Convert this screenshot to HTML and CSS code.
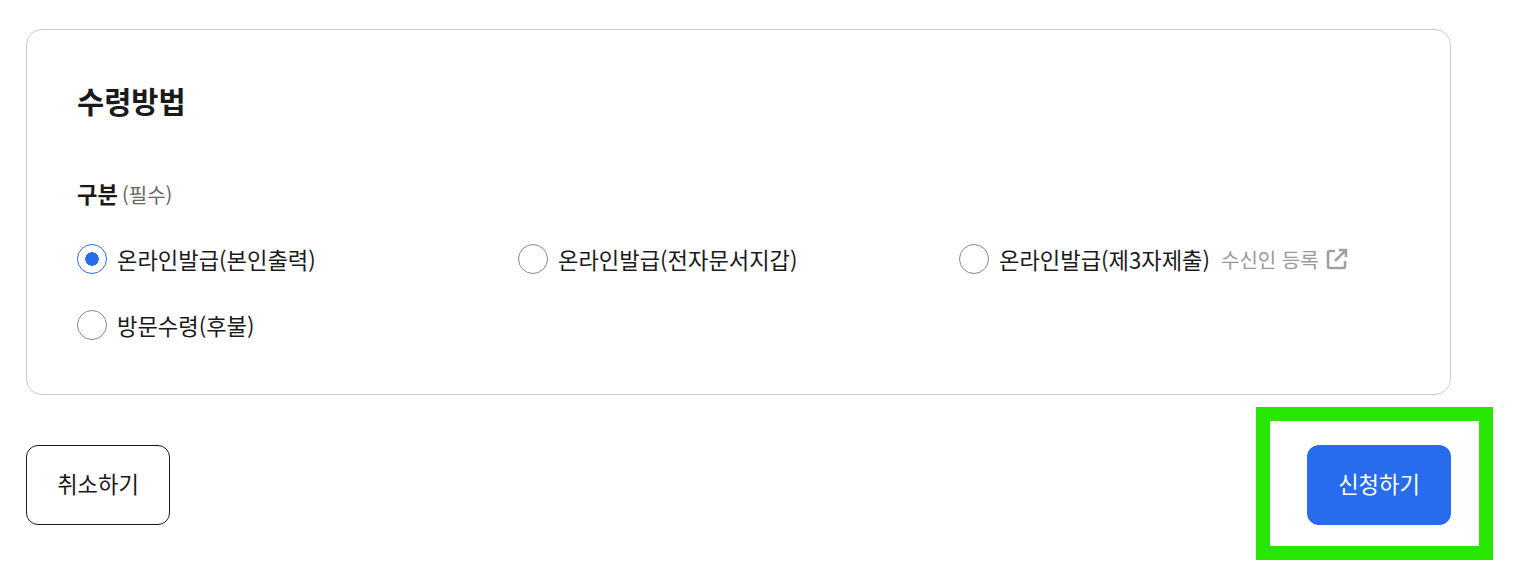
FILE: index.html
```html
<!DOCTYPE html>
<html lang="ko">
<head>
    <meta charset="UTF-8">
    <meta name="viewport" content="width=device-width, initial-scale=1.0">
    <title>수령방법</title>
    <link rel="stylesheet" href="styles.css">
</head>
<body>
    <div class="page">
        <section class="receive-card">
            <h2 class="card-title">수령방법</h2>
            <div class="field-label">구분 <span class="required">(필수)</span></div>
            <div class="radio-grid">
                <label class="radio-item">
                    <input type="radio" name="receive" checked>
                    <span>온라인발급(본인출력)</span>
                </label>
                <label class="radio-item">
                    <input type="radio" name="receive">
                    <span>온라인발급(전자문서지갑)</span>
                </label>
                <div class="radio-item">
                    <label class="radio-item">
                        <input type="radio" name="receive">
                        <span>온라인발급(제3자제출)</span>
                    </label>
                    <a class="link-register" href="#">수신인 등록
                        <svg width="22" height="22" viewBox="0 0 22 22" fill="none" stroke="#a0a0a0" stroke-width="2.6">
                            <path d="M9 3H4a2 2 0 0 0-2 2v13a2 2 0 0 0 2 2h13a2 2 0 0 0 2-2v-5"/>
                            <path d="M13 2h7v7M20 2L9 13"/>
                        </svg>
                    </a>
                </div>
                <label class="radio-item">
                    <input type="radio" name="receive">
                    <span>방문수령(후불)</span>
                </label>
            </div>
        </section>

        <div class="actions">
            <button class="btn btn-outline">취소하기</button>
            <div class="btn-wrap">
                <button class="btn btn-primary">신청하기</button>
                <div class="highlight"></div>
            </div>
        </div>
    </div>
</body>
</html>
```

FILE: styles.css
```css
* {
    box-sizing: border-box;
}

body {
    margin: 0;
    min-height: 572px;
    background: #fff;
    color: #1a1a1a;
    font-family: "Noto Sans CJK KR", "Noto Sans", sans-serif;
}

.page {
    width: 1425px;
    padding-top: 29px;
    margin-left: 26px;
    height: 572px;
}

.receive-card {
    height: 366px;
    padding: 47px 50px 0;
    border: 1px solid #ccc;
    border-radius: 16px;
}

.card-title {
    margin: 0;
    font-size: 29.5px;
    line-height: 46px;
    font-weight: 700;
}

.field-label {
    margin-top: 54px;
    font-size: 22.2px;
    line-height: 32px;
    font-weight: 700;
}

.required {
    margin-left: -2px;
    font-size: 20px;
    font-weight: 400;
    color: #666;
}

.radio-grid {
    display: grid;
    grid-template-columns: repeat(3, 441px);
    grid-auto-rows: 66px;
    margin-top: 15px;
}

.radio-item {
    display: flex;
    align-items: center;
    font-size: 22.2px;
    cursor: pointer;
}

.radio-item input {
    appearance: none;
    width: 30px;
    height: 30px;
    margin: 0 10px 0 0;
    border: 1px solid #888;
    border-radius: 50%;
    background: #fff;
}

.radio-item input:checked {
    border-color: #266ced;
    background: radial-gradient(circle, #266ced 0, #266ced 6.5px, #fff 7px);
}

.link-register {
    display: flex;
    align-items: center;
    gap: 7px;
    margin-left: 11px;
    font-size: 20px;
    color: #999;
    text-decoration: none;
}

.actions {
    display: flex;
    justify-content: space-between;
    margin-top: 50px;
}

.btn-wrap {
    position: relative;
}

.btn {
    width: 144px;
    height: 80px;
    padding: 0 0 4px;
    border-radius: 12px;
    font-family: inherit;
    font-size: 22.2px;
    cursor: pointer;
}

.btn-outline {
    border: 1px solid #1a1a1a;
    background: #fff;
    color: #1a1a1a;
}

.btn-primary {
    display: block;
    border: none;
    background: #266ced;
    color: #fff;
}

.highlight {
    position: absolute;
    left: -51px;
    top: -38px;
    width: 237px;
    height: 153px;
    border: 14px solid #27e600;
    pointer-events: none;
}
```
